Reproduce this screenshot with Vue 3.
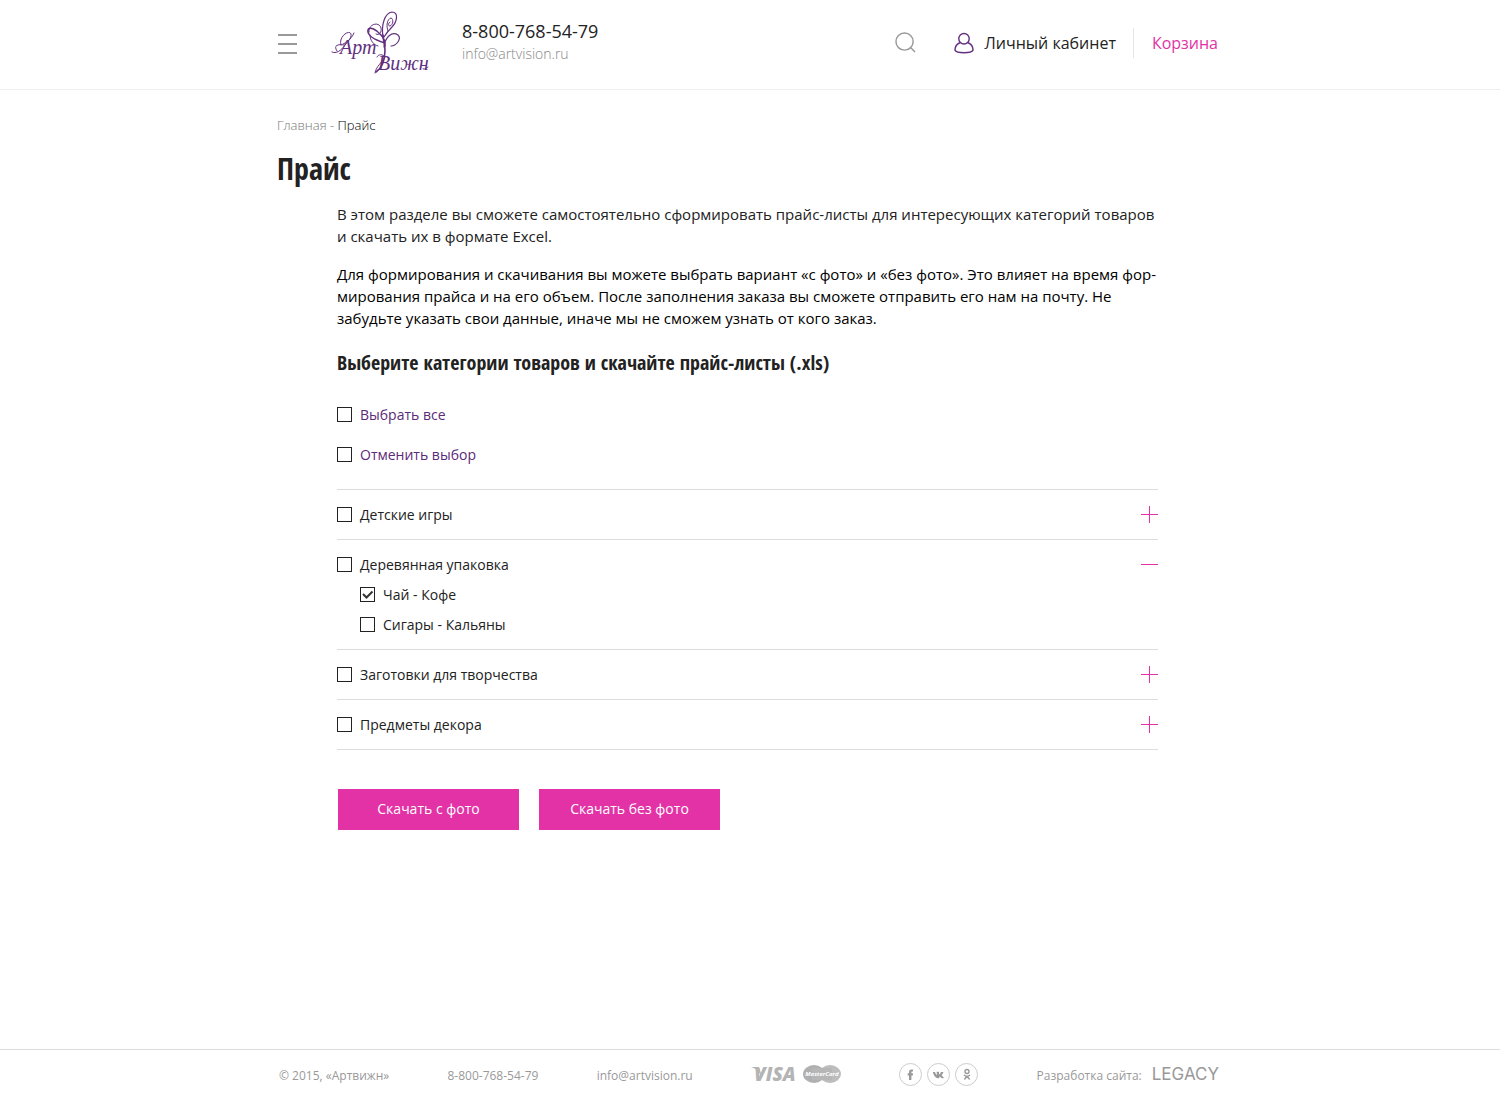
<script setup>
import { ref, reactive } from 'vue'

const categories = reactive([
  { id: 'games', name: 'Детские игры', checked: false, open: false, children: [] },
  {
    id: 'wood',
    name: 'Деревянная упаковка',
    checked: false,
    open: true,
    children: [
      { id: 'tea', name: 'Чай - Кофе', checked: true },
      { id: 'cigars', name: 'Сигары - Кальяны', checked: false }
    ]
  },
  { id: 'craft', name: 'Заготовки для творчества', checked: false, open: false, children: [] },
  { id: 'decor', name: 'Предметы декора', checked: false, open: false, children: [] }
])
const all = ref(false)
const none = ref(false)

function setAll(value) {
  all.value = value
  none.value = !value
  for (const category of categories) {
    category.checked = value
    for (const child of category.children) child.checked = value
  }
}
</script>

<template>
  <div class="page">
    <header class="header">
      <div class="wrap header-row">
        <button class="burger" type="button" aria-label="Меню">
          <span></span><span></span><span></span>
        </button>
        <a class="logo" href="#" aria-label="Артвижн">
          <svg width="110" height="75" viewBox="0 0 110 75" fill="none" stroke="#62307f" stroke-linecap="round">
            <path stroke-width="1.6" d="M51 66C57 62 60 53 60 44C60 38 58 34 58 29" />
            <path stroke-width="1.2" d="M58 31C56 18 60 7 67 6C74 6 72 16 67 21C64 24 62 26 59 31" />
            <path stroke-width="1" d="M63 25C61 20 62 13 66 12C69 13 68 19 65 20C63 20 63 17 65 16" />
            <path stroke-width="1.6" d="M60 37C50 34 42 30 43 24C44 20 51 23 56 29C58 31 60 34 60 40" />
            <path stroke-width="1" d="M44 26C43 18 54 15 56 22C57 26 54 30 51 28M45 29C45 35 49 39 53 40" />
            <path stroke-width="1.2" d="M59 41C60 31 67 25 73 29C77 33 71 40 66 40" />
            <path stroke-width="1" d="M7 46C11 48 16 45 20 39C25 33 28 30 29 27M12 45C8 39 13 38 19 39M16 39C13 31 24 23 26 28C27 33 21 37 18 38" />
            <text class="script" x="15" y="48">Арт</text>
            <text class="script" x="53" y="64">Вижн</text>
            <path stroke-width="1" d="M50 67C51 60 57 57 60 51C58 48 53 48 52 51M98 63C100 64 102 61 103 61" />
          </svg>
        </a>
        <address class="contacts">
          <a class="phone" href="tel:88007685479">8-800-768-54-79</a>
          <a class="email" href="mailto:info@artvision.ru">info@artvision.ru</a>
        </address>
        <nav class="tools">
          <button class="search" type="button" aria-label="Поиск">
            <svg width="21" height="21" viewBox="0 0 22 22" fill="none" stroke="#999" stroke-width="1.5">
              <circle cx="10" cy="10" r="9" /><path d="M16 16L21 21" />
            </svg>
          </button>
          <a class="account" href="#">
            <svg width="20" height="22" viewBox="0 0 21 22" fill="none" stroke="#62307f" stroke-width="1.5">
              <circle cx="10.500" cy="6.500" r="5.500" />
              <path d="M6.500 10.500C3 12 1 15.500 1 18.500C2 20.500 6 21.200 10.500 21.200C15 21.200 19 20.500 20 18.500C20 15.500 18 12 14.500 10.500" />
            </svg>
            Личный кабинет
          </a>
          <a class="cart" href="#">Корзина</a>
        </nav>
      </div>
    </header>

    <main class="wrap main">
      <nav class="crumbs"><a href="#">Главная</a> - <span>Прайс</span></nav>
      <h1>Прайс</h1>
      <div class="content">
        <p class="lead">В этом разделе вы сможете самостоятельно сформировать прайс-листы для интересующих категорий товаров и скачать их в формате Excel.</p>
        <p>Для формирования и скачивания вы можете выбрать вариант «с фото» и «без фото». Это влияет на время фор&shy;мирования прайса и на его объем. После заполнения заказа вы сможете отправить его нам на почту. Не забудьте указать свои данные, иначе мы не сможем узнать от кого заказ.</p>
        <h2>Выберите категории товаров и скачайте прайс-листы (.xls)</h2>

        <form @submit.prevent>
          <div class="bulk">
            <label><input type="checkbox" :checked="all" @change="setAll(true)" />Выбрать все</label>
            <label><input type="checkbox" :checked="none" @change="setAll(false)" />Отменить выбор</label>
          </div>
          <ul class="categories">
            <li v-for="category in categories" :key="category.id">
              <div class="line">
                <label><input v-model="category.checked" type="checkbox" />{{ category.name }}</label>
                <button
                  class="toggle"
                  :class="{ open: category.open }"
                  type="button"
                  :aria-expanded="category.open"
                  :aria-label="category.name"
                  @click="category.open = !category.open"
                ></button>
              </div>
              <ul v-if="category.open" class="children">
                <li v-for="child in category.children" :key="child.id" class="line">
                  <label><input v-model="child.checked" type="checkbox" />{{ child.name }}</label>
                </li>
              </ul>
            </li>
          </ul>
          <div class="actions">
            <button type="submit">Скачать с фото</button>
            <button type="submit">Скачать без фото</button>
          </div>
        </form>
      </div>
    </main>

    <footer class="footer">
      <div class="wrap footer-row">
        <span>© 2015, «Артвижн»</span>
        <a href="tel:88007685479">8-800-768-54-79</a>
        <a href="mailto:info@artvision.ru">info@artvision.ru</a>
        <svg class="cards" width="90" height="26" viewBox="0 -3 90 26">
          <path fill="#b4b4b4" d="M0 3H6C8 3 9 4 9 6L11 13L7 7C5 5 3 4 0 3Z" />
          <text class="visa" x="3" y="17">VISA</text>
          <ellipse cx="63" cy="10" rx="11" ry="9" fill="#b0b0b0" />
          <ellipse cx="79" cy="10" rx="11" ry="9" fill="#bdbdbd" />
          <rect x="61" y="4" width="20" height="12" fill="#b6b6b6" />
          <text class="mastercard" x="71" y="12" text-anchor="middle">MasterCard</text>
        </svg>
        <div class="social">
          <a href="#" aria-label="Facebook">
            <svg width="23" height="23" viewBox="0 0 23 23" fill="#999">
              <path d="M10 17V12.400H8.700V10.300H10V9C10 7.300 11 6.500 12.500 6.500H14V8.600H13C12.500 8.600 12.400 8.900 12.400 9.400V10.300H14L13.800 12.400H12.400V17Z" />
            </svg>
          </a>
          <a href="#" aria-label="ВКонтакте">
            <svg width="23" height="23" viewBox="0 0 23 23" fill="#999">
              <path d="M11 15.200C8.400 15 7 12.500 5.900 9.400C5.800 9 6 8.900 6.300 8.900H7.700C8.300 8.900 8.500 10.900 9.700 11.900C10.100 11.800 10.100 9.800 9.400 9.300C9.800 8.600 11.800 8.700 12 9.200C12.200 9.900 11.900 11.400 12.400 11.500C13.300 10.900 13.700 8.900 14.300 8.900H16C17.300 9.100 15.200 11.200 14.600 12C14.500 12.700 17.300 14.300 16.600 14.900C16 15.300 14.800 15.200 14.500 14.900L12.900 13.500C12.300 13.500 12.500 15.200 11.800 15.200Z" />
            </svg>
          </a>
          <a href="#" aria-label="Одноклассники">
            <svg width="23" height="23" viewBox="0 0 23 23" fill="none" stroke="#999" stroke-width="1.400" stroke-linecap="round">
              <circle cx="12" cy="8.500" r="2" />
              <path d="M9.400 12.200C11 13.500 13 13.500 14.600 12.200M12 13.200L9.700 16M12 13.200L14.300 16" />
            </svg>
          </a>
        </div>
        <a class="developer" href="#">Разработка сайта: <span class="legacy">LEGACY</span></a>
      </div>
    </footer>
  </div>
</template>

<style>
body {
  margin: 0;
}
</style>

<style scoped>
.page {
  display: flex;
  flex-direction: column;
  min-height: 100vh;
  background: #fff;
  color: #222;
  font-family: "Open Sans", sans-serif;
  font-size: 14px;
}
a {
  color: inherit;
  text-decoration: none;
}
button {
  padding: 0;
  border: 0;
  background: none;
  font: inherit;
  cursor: pointer;
}
svg {
  display: block;
}
.wrap {
  box-sizing: border-box;
  width: 100%;
  max-width: 946px;
  margin: 0 auto;
}
.header {
  border-bottom: 1px solid #eee;
}
.header-row {
  display: flex;
  align-items: center;
  height: 89px;
  padding: 0 5px 2px 1px;
}
.burger {
  display: flex;
  flex-direction: column;
  gap: 7px;
  width: 19px;
}
.burger span {
  height: 2px;
  background: #999;
}
.logo {
  margin: 0 27px 0 28px;
}
.script {
  fill: #62307f;
  stroke: none;
  font-family: "Liberation Serif", serif;
  font-size: 20px;
  font-style: italic;
}
.contacts {
  display: flex;
  flex-direction: column;
  gap: 1px;
  padding-bottom: 5px;
  font-style: normal;
}
.phone {
  font-size: 18px;
  line-height: 24px;
}
.email {
  color: #888;
  font-weight: 300;
  line-height: 20px;
}
.tools {
  display: flex;
  align-items: center;
  margin-left: auto;
  padding-bottom: 2px;
  font-size: 16px;
  line-height: 30px;
}
.account {
  display: flex;
  align-items: center;
  gap: 11px;
  margin-left: 38px;
  padding-right: 17px;
  border-right: 1px solid #e5e5e5;
}
.cart {
  margin-left: 18px;
  color: #e232a6;
}
.main {
  flex: 1;
  padding: 25px 0 40px;
}
.crumbs {
  color: #777;
  font-size: 13px;
  font-weight: 300;
  line-height: 20px;
}
.crumbs span {
  color: #000;
}
h1,
h2 {
  font-family: "Open Sans Condensed", "Liberation Sans Narrow", "Open Sans", sans-serif;
  font-weight: 700;
}
h1 {
  margin: 14px 0;
  font-size: 30px;
  line-height: 40px;
}
.content {
  margin: 0 65px 0 60px;
}
p {
  margin: 0 0 16px;
  color: #000;
  font-size: 15px;
  line-height: 22px;
}
.lead {
  color: #222;
}
h2 {
  margin: 20px 0 23px;
  font-size: 20px;
  line-height: 28px;
}
label {
  display: flex;
  align-items: center;
  gap: 8px;
  line-height: 30px;
}
input {
  appearance: none;
  flex: none;
  box-sizing: border-box;
  width: 15px;
  height: 15px;
  margin: 0 0 1px;
  border: 1px solid #222;
  background: #fff;
}
input:checked {
  background: url("data:image/svg+xml,%3Csvg xmlns='http://www.w3.org/2000/svg' viewBox='0 0 13 13'%3E%3Cpath d='M2 6L5.500 9.500L11.500 3.500' fill='none' stroke='%23333' stroke-width='2'/%3E%3C/svg%3E") center / 13px;
}
.bulk {
  display: flex;
  flex-direction: column;
  align-items: flex-start;
  gap: 10px;
  margin-bottom: 19px;
  color: #5b2a78;
}
ul {
  margin: 0;
  padding: 0;
  list-style: none;
}
.categories {
  border-top: 1px solid #ddd;
}
.categories > li {
  padding: 10px 0 9px;
  border-bottom: 1px solid #ddd;
}
.line {
  display: flex;
  align-items: center;
  justify-content: space-between;
  height: 30px;
}
.children {
  padding-left: 23px;
}
.toggle {
  width: 17px;
  height: 17px;
  margin-bottom: 1px;
  background:
    linear-gradient(#e232a6, #e232a6) center / 17px 1px no-repeat,
    linear-gradient(#e232a6, #e232a6) center / 1px 17px no-repeat;
}
.toggle.open {
  background: linear-gradient(#e232a6, #e232a6) center / 17px 1px no-repeat;
}
.actions {
  display: flex;
  gap: 20px;
  padding: 39px 0 0 1px;
}
.actions button {
  width: 181px;
  height: 41px;
  padding-bottom: 2px;
  background: #e232a6;
  color: #fff;
}
.footer {
  border-top: 1px solid #ddd;
  color: #999;
  font-size: 12px;
}
.footer-row {
  display: flex;
  align-items: center;
  justify-content: space-between;
  height: 50px;
  padding: 0 4px 0 2px;
}
.cards {
  margin-bottom: 2px;
  overflow: visible;
}
.visa {
  fill: #b4b4b4;
  font-family: "Open Sans", sans-serif;
  font-size: 19px;
  font-style: italic;
  font-weight: 800;
}
.mastercard {
  fill: #fff;
  font-family: "Open Sans", sans-serif;
  font-size: 6px;
  font-style: italic;
  font-weight: 700;
}
.social {
  display: flex;
  gap: 5px;
  margin-bottom: 2px;
}
.social a {
  box-sizing: border-box;
  display: flex;
  align-items: center;
  justify-content: center;
  width: 23px;
  height: 23px;
  border: 1px solid #ccc;
  border-radius: 50%;
}
.social svg {
  flex: none;
}
.developer {
  display: flex;
  align-items: center;
  gap: 10px;
}
.legacy {
  padding-bottom: 2px;
  font-family: Inter, sans-serif;
  font-size: 17px;
  font-weight: 400;
}
</style>
